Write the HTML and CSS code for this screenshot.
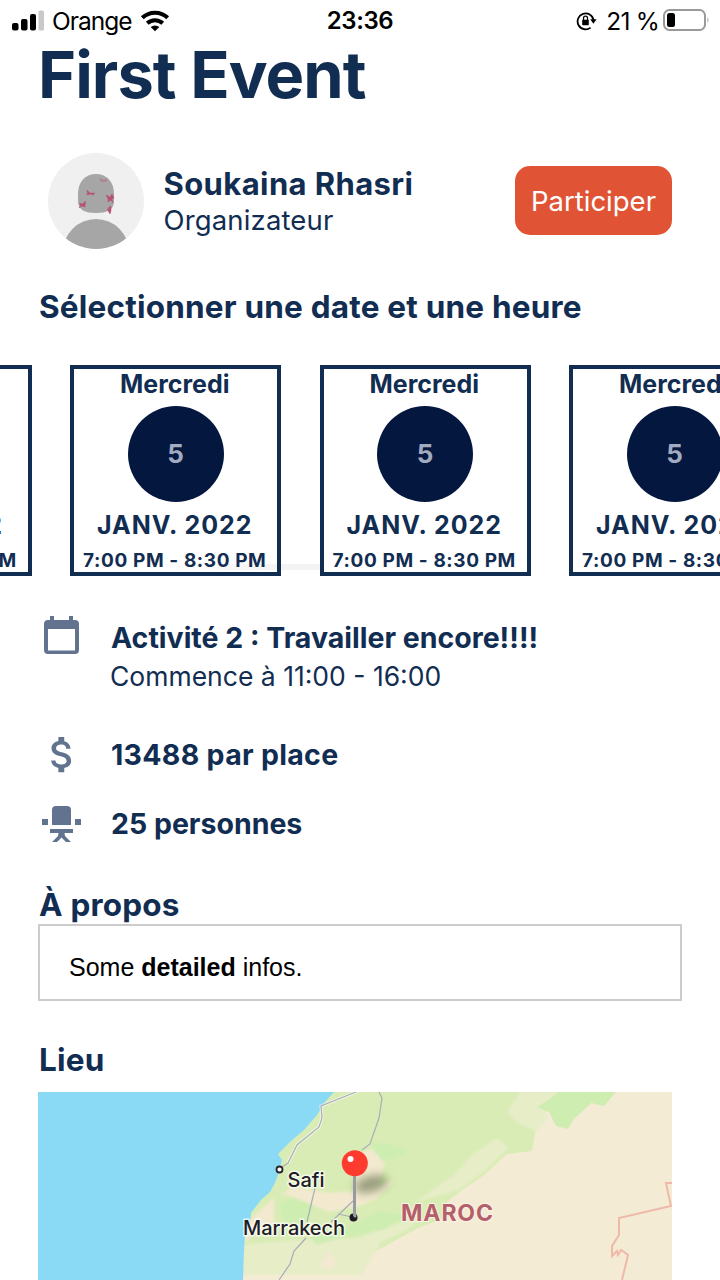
FILE: index.html
```html
<!DOCTYPE html>
<html lang="fr">
<head>
<meta charset="utf-8">
<title>First Event</title>
<link rel="stylesheet" href="styles.css">
</head>
<body>
<header class="status">
  <div class="status-left">
    <svg class="signal" viewBox="0 0 33 22" width="33" height="22"><rect x="0" y="13" width="6.5" height="7.500" rx="2"/><rect x="9" y="9" width="6.5" height="11.500" rx="2"/><rect x="18" y="4" width="6" height="16.500" rx="2"/><rect x="26.500" y=".5" width="5.500" height="20" rx="1.500" fill="#c9c9c9"/></svg>
    <span class="carrier">Orange</span>
    <svg class="wifi" viewBox="0 0 30 22" width="30" height="22"><g fill="none" stroke="#000" stroke-width="4"><path d="M2.300 7.800a18.200 18.200 0 0 1 25.400 0"/><path d="M7.300 13.200a11.200 11.200 0 0 1 15.400 0"/></g><path d="M15 21.300l-4.300-4.200a6.300 6.300 0 0 1 8.600 0z"/></svg>
  </div>
  <time class="clock">23:36</time>
  <div class="status-right">
    <svg class="rotation" viewBox="0 0 22 20" width="22" height="20"><path d="M14.600 16.600A8 8 0 1 1 17.500 9" fill="none" stroke="#000" stroke-width="1.800"/><path d="M14.200 8.200h6.400l-3.200 4.600z"/><rect x="6.200" y="8.800" width="6.600" height="5.400" rx=".8"/><path d="M7.500 9V7.200a2 2 0 0 1 4 0V9" fill="none" stroke="#000" stroke-width="1.300"/></svg>
    <span class="percent">21 %</span>
    <svg class="battery" viewBox="0 0 47 24" width="47" height="24"><rect x="1" y="1" width="41" height="20" rx="5.500" fill="none" stroke="#999" stroke-width="2"/><rect x="4" y="4" width="8" height="14" rx="2.500"/><path d="M44.500 8q2 3 0 6z" fill="#999"/></svg>
  </div>
</header>
<main class="page">
  <h1 class="title">First Event</h1>
  <section class="host">
    <svg class="avatar" viewBox="0 0 96 96" width="96" height="96"><defs><clipPath id="disc"><circle cx="48" cy="48" r="48"/></clipPath></defs><circle cx="48" cy="48" r="48" fill="#f0f0f0"/><g clip-path="url(#disc)" fill="#a6a6a6"><path d="M30 41c0-12 7-20 18-20s18 8 18 20v7c0 9-7 12-18 12s-18-3-18-12z"/><circle cx="48" cy="99" r="33"/></g><g fill="#b75275" stroke="#b75275" stroke-width=".5"><path d="M42 40l-3-3 .5 4-1 1 4-1 3 1 1-2zM31 55l3-2 3 1 .500-6-3 3-3-1 1 3zM62 44l-4-2 2 4 0 3 3-2 2 3-1-4 2-1-2-4zM63 53l-3 2 1 2-2-1 3 5 1-3z"/><path d="M51 26l3 3 2-1 2 1 1-3-3 1z" opacity=".45"/></g></svg>
    <div class="host-text">
      <strong class="host-name">Soukaina Rhasri</strong>
      <span class="host-role">Organizateur</span>
    </div>
    <button class="join">Participer</button>
  </section>
  <h2 class="heading pick">Sélectionner une date et une heure</h2>
  <div class="dates">
    <i class="scrollbar"></i>
    <article class="card"><b class="day">Mercredi</b><b class="num">5</b><b class="month">JANV. 2022</b><b class="hours">7:00 PM - 8:30 PM</b></article>
    <article class="card"><b class="day">Mercredi</b><b class="num">5</b><b class="month">JANV. 2022</b><b class="hours">7:00 PM - 8:30 PM</b></article>
    <article class="card"><b class="day">Mercredi</b><b class="num">5</b><b class="month">JANV. 2022</b><b class="hours">7:00 PM - 8:30 PM</b></article>
    <article class="card"><b class="day">Mercredi</b><b class="num">5</b><b class="month">JANV. 2022</b><b class="hours">7:00 PM - 8:30 PM</b></article>
  </div>
  <ul class="facts">
    <li class="fact activity">
      <svg viewBox="0 0 47 47" width="47" height="47"><path fill-rule="evenodd" d="M12 3h4v4h15V3h4v4h2q4 0 4 4v26q0 4-4 4H10q-4 0-4-4V11q0-4 4-4h2zM10 16v21.500h27V16z"/></svg>
      <div><strong class="label">Activité 2 : Travailler encore!!!!</strong><span class="sub">Commence à 11:00 - 16:00</span></div>
    </li>
    <li class="fact price">
      <svg viewBox="0 0 24 24" width="47" height="47"><path transform="translate(.4 0)" d="M11.800 10.900c-2.270-.59-3-1.200-3-2.150 0-1.090 1.010-1.850 2.700-1.850 1.780 0 2.440.85 2.500 2.100h2.210c-.07-1.720-1.120-3.300-3.210-3.810V3h-3v2.160c-1.940.42-3.500 1.680-3.500 3.610 0 2.310 1.910 3.460 4.700 4.130 2.500.6 3 1.480 3 2.410 0 .69-.49 1.790-2.700 1.790-2.060 0-2.870-.92-2.980-2.100h-2.200c.12 2.190 1.760 3.420 3.680 3.830V21h3v-2.150c1.950-.37 3.500-1.500 3.500-3.550 0-2.840-2.430-3.810-4.700-4.400z"/></svg>
      <strong class="label">13488 par place</strong>
    </li>
    <li class="fact seats">
      <svg viewBox="0 0 47 47" width="47" height="47"><path transform="translate(0 1)" d="M14 24V9q0-4 4-4h11q4 0 4 4v15zM4 18h6v6H4zM37 18h6v6h-6zM12 28h23v4h-8.500l.5 3 6 6h-5l-4.500-4.500L19 41h-5l6-6 .5-3H12z"/></svg>
      <strong class="label">25 personnes</strong>
    </li>
  </ul>
  <h2 class="heading about">À propos</h2>
  <p class="info">Some <b>detailed</b> infos.</p>
  <h2 class="heading place">Lieu</h2>
  <svg class="map" viewBox="38 1092 634 188" width="634" height="188">
    <defs>
      <filter id="soft" x="-50%" y="-50%" width="200%" height="200%"><feGaussianBlur stdDeviation="5"/></filter>
      <filter id="edge"><feGaussianBlur stdDeviation="1"/></filter>
    </defs>
    <path fill="#f4ebd5" d="M38 1092h634v188H38z"/>
    <path fill="#daecb5" d="M330 1092H556l-8 15-12 21-4 23-25 3-24 22-21 14-20 16 8 10-32 12-40 22-50 12-90 0V1150z"/>
    <g filter="url(#edge)">
      <path fill="#e6edc7" d="M520 1092h37l-14 22 6 3-12 14-18-7-12-12zM497 1138l12 10-26 24-24 18-44 12 38-26 20-22zM238 1245l60-5 60-2 30-12 38-10-24 17-20 8-20 34H238z"/>
      <path fill="#ceedb1" d="M371 1142l18 2 20 7-15 8-18 1zM280 1204l14-8 20 10-6 14-18 8-8-12zM310 1236l40-10 30-15 26 4-20 14-50 10-20 6z"/>
      <path fill="#f2e9cf" d="M280 1196l12-9 40 6 24-2 0-36 16-6 13 15-8 22 18-6-18 18-18 8-30 6-24-10-20-8zM258 1212l16-14v24l-22 14-10 8v-15z"/>
      <path fill="#f2e9d0" d="M322 1262l6-12 10 14-10 6-12-4z"/>
    </g>
    <path fill="#ceedb1" d="M558 1092h58l-12 14-13-3-17 16-6 10-12-3-7-14-12-5 13-8z"/>
    <path fill="#8adaf6" d="M38 1092h296l-9 10-8 13-13 15-13 11-13 13 4 6-3 12-4 11-5 9-9 8-10 13-1 9-5 14-1 14-1 30H38z"/>
    <path fill="none" stroke="#fff" stroke-width="3" opacity=".6" d="M356 1092l-35 14 1 12-3 9-22 18-9 18"/>
    <g fill="none" stroke="#a9adb8" stroke-width="1.200"><path d="M356 1092l-35 14 1 12-3 9-22 18-9 18-6 4M379 1092l3 6-3 20-9 26-8 6M315 1188l-8 34M306 1238l-12 13-4 13-11 16M353 1201l-22 21M338 1214l14 3"/></g>
    <path fill="none" stroke="#efb8a9" stroke-width="2" d="M672 1183h-6l5 23-52 12v17l-7 11v10l5-5 1 4 3-5 7 5-6 25"/>
    <ellipse cx="371" cy="1184" rx="17" ry="8" fill="#68754f" opacity=".65" filter="url(#soft)" transform="rotate(-15 371 1184)"/>
    <circle cx="279.500" cy="1169.500" r="3" fill="#fff" stroke="#26232b" stroke-width="1.800"/>
    <circle cx="353.500" cy="1217.500" r="4" fill="#1e1c26"/><circle cx="355" cy="1216" r="1.500" fill="#aaa"/>
    <path stroke="#999ba3" stroke-width="3" d="M354.500 1174v42"/>
    <circle cx="354.800" cy="1163.200" r="13" fill="#ff3a2f"/><circle cx="350.500" cy="1159" r="3" fill="#fff"/>
    <g class="map-label"><text x="287.500" y="1186.500" textLength="37">Safi</text><text x="243" y="1235" textLength="102">Marrakech</text></g>
    <text class="map-country" x="401" y="1220.500" textLength="92">MAROC</text>
  </svg>
</main>
</body>
</html>
```
FILE: styles.css
```css
* { box-sizing: border-box; margin: 0; padding: 0; }
body { width: 720px; height: 1280px; overflow: hidden; background: #fff; color: #122d52; font-family: Inter, "Liberation Sans", sans-serif; }
.status { display: grid; grid-template-columns: 1fr auto 1fr; align-items: center; height: 40px; padding: 0 12px 0 12px; color: #000; font-size: 24.5px; line-height: 40px; }
.status-left, .status-right { display: flex; align-items: center; }
.status-right { justify-content: flex-end; margin-right: -2px; }
.carrier { width: 79px; margin-left: 7px; letter-spacing: -1px; }
.wifi { margin-left: 9px; }
.clock { padding-top: 1px; font-size: 24px; font-weight: 600; letter-spacing: -.4px; }
.percent { margin: 0 4px 0 8px; letter-spacing: -.8px; }
.page { display: flex; flex-direction: column; padding: 0 48px 0 38px; }
.title { height: 68px; font-size: 65px; line-height: 69px; font-weight: 700; letter-spacing: -.95px; white-space: nowrap; }
.host { display: flex; align-items: center; height: 96px; margin-top: 45px; padding-left: 10px; }
.host-text { display: flex; flex-direction: column; margin-left: 19.5px; padding-top: 1px; white-space: nowrap; }
.host-name { font-size: 31px; line-height: 37px; font-weight: 700; letter-spacing: .4px; }
.host-role { font-size: 27.5px; line-height: 37px; letter-spacing: .15px; }
.join { width: 157px; height: 69px; margin: 0 0 1px auto; border: 0; border-radius: 15px; background: #e05435; color: #fff; font: 27.5px/71px Inter, sans-serif; }
.heading { padding-left: 1px; font-size: 31.5px; line-height: 40px; font-weight: 700; letter-spacing: .2px; white-space: nowrap; }
.pick { margin-top: 38px; }
.dates { position: relative; isolation: isolate; display: flex; gap: 38.5px; margin: 38px -48px 0 -217.5px; overflow: hidden; }
.card { display: flex; flex: none; flex-direction: column; align-items: center; width: 211px; height: 211px; padding-right: 1.5px; border: 4px solid #122d52; white-space: nowrap; }
.card b { flex: none; font-weight: 700; }
.card .day { font-size: 25px; line-height: 30px; font-weight: 650; }
.card .num { width: 96px; height: 96px; margin: 7px -1.5px 0 0; border-radius: 50%; background: #04173f; color: #a2abc0; font-size: 26px; line-height: 95px; text-align: center; }
.card .month { margin-top: 8px; font-size: 25px; line-height: 31px; letter-spacing: 1px; }
.card .hours { margin-top: 4px; font-size: 19px; line-height: 32px; letter-spacing: .6px; font-weight: 650; }
.scrollbar { position: absolute; z-index: -1; left: 330px; top: 199px; width: 169px; height: 6px; background: linear-gradient(90deg, #fff, #f3f3f3 80%); }
.facts { list-style: none; }
.fact { display: flex; align-items: center; height: 69px; }
.fact svg { flex: none; fill: #61738f; margin-right: 26px; }
.activity { height: 80px; margin-top: 37px; align-items: flex-start; }
.activity div { display: flex; flex-direction: column; padding-top: 5px; }
.label { font-size: 28.500px; line-height: 40px; font-weight: 700; white-space: nowrap; }
.price .label { letter-spacing: .3px; }
.sub { margin-left: -1px; font-size: 26.5px; line-height: 37px; }
.price { margin-top: 27px; }
.about { margin-top: 27px; }
.info { width: 644px; height: 77px; margin-top: -1px; padding: 0 29px; border: 2px solid #ccc; color: #000; font: 25px/82px "Liberation Sans", sans-serif; }
.place { margin-top: 39px; }
.map { display: block; margin-top: 12px; }
.map-label { fill: #1f1c25; stroke: #fff; stroke-width: 3px; stroke-opacity: .7; paint-order: stroke; font-size: 20px; font-weight: 500; }
.map-country { fill: #b4606b; stroke: #fbf3e5; stroke-width: 2px; paint-order: stroke; font-size: 23px; font-weight: 700; }
```
